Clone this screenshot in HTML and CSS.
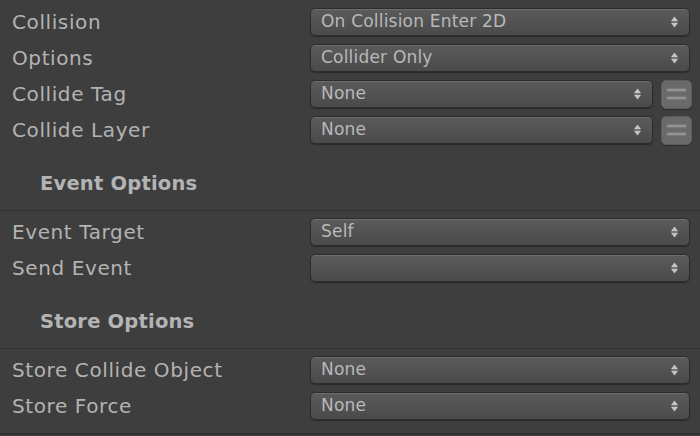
FILE: index.html
```html
<!DOCTYPE html>
<html>
<head>
<meta charset="utf-8">
<link rel="stylesheet" href="styles.css">
</head>
<body>
<div class="panel">
  <div class="row"><span class="label">Collision</span><div class="field"><div class="popup"><span class="val">On Collision Enter 2D</span><svg class="arr" width="7" height="12" viewBox="0 0 7 12"><path d="M3.5 0.5 L7 5 L0 5 Z M0 7 L7 7 L3.5 11.5 Z" fill="#c2c2c2"/><rect x="0.5" y="5.5" width="6" height="1" fill="#9a9a9a"/></svg></div></div></div>
  <div class="row"><span class="label">Options</span><div class="field"><div class="popup"><span class="val">Collider Only</span><svg class="arr" width="7" height="12" viewBox="0 0 7 12"><path d="M3.5 0.5 L7 5 L0 5 Z M0 7 L7 7 L3.5 11.5 Z" fill="#c2c2c2"/><rect x="0.5" y="5.5" width="6" height="1" fill="#9a9a9a"/></svg></div></div></div>
  <div class="row"><span class="label">Collide Tag</span><div class="field"><div class="popup"><span class="val">None</span><svg class="arr" width="7" height="12" viewBox="0 0 7 12"><path d="M3.5 0.5 L7 5 L0 5 Z M0 7 L7 7 L3.5 11.5 Z" fill="#c2c2c2"/><rect x="0.5" y="5.5" width="6" height="1" fill="#9a9a9a"/></svg></div><div class="btn"><span class="bar"></span><span class="bar"></span></div></div></div>
  <div class="row"><span class="label">Collide Layer</span><div class="field"><div class="popup"><span class="val">None</span><svg class="arr" width="7" height="12" viewBox="0 0 7 12"><path d="M3.5 0.5 L7 5 L0 5 Z M0 7 L7 7 L3.5 11.5 Z" fill="#c2c2c2"/><rect x="0.5" y="5.5" width="6" height="1" fill="#9a9a9a"/></svg></div><div class="btn"><span class="bar"></span><span class="bar"></span></div></div></div>
  <div class="header">Event Options</div>
  <div class="divider"></div>
  <div class="row first"><span class="label">Event Target</span><div class="field"><div class="popup"><span class="val">Self</span><svg class="arr" width="7" height="12" viewBox="0 0 7 12"><path d="M3.5 0.5 L7 5 L0 5 Z M0 7 L7 7 L3.5 11.5 Z" fill="#c2c2c2"/><rect x="0.5" y="5.5" width="6" height="1" fill="#9a9a9a"/></svg></div></div></div>
  <div class="row"><span class="label">Send Event</span><div class="field"><div class="popup"><span class="val"></span><svg class="arr" width="7" height="12" viewBox="0 0 7 12"><path d="M3.5 0.5 L7 5 L0 5 Z M0 7 L7 7 L3.5 11.5 Z" fill="#c2c2c2"/><rect x="0.5" y="5.5" width="6" height="1" fill="#9a9a9a"/></svg></div></div></div>
  <div class="header">Store Options</div>
  <div class="divider"></div>
  <div class="row first"><span class="label">Store Collide Object</span><div class="field"><div class="popup"><span class="val">None</span><svg class="arr" width="7" height="12" viewBox="0 0 7 12"><path d="M3.5 0.5 L7 5 L0 5 Z M0 7 L7 7 L3.5 11.5 Z" fill="#c2c2c2"/><rect x="0.5" y="5.5" width="6" height="1" fill="#9a9a9a"/></svg></div></div></div>
  <div class="row"><span class="label">Store Force</span><div class="field"><div class="popup"><span class="val">None</span><svg class="arr" width="7" height="12" viewBox="0 0 7 12"><path d="M3.5 0.5 L7 5 L0 5 Z M0 7 L7 7 L3.5 11.5 Z" fill="#c2c2c2"/><rect x="0.5" y="5.5" width="6" height="1" fill="#9a9a9a"/></svg></div></div></div>
  <div class="bottom"></div>
</div>
</body>
</html>
```

FILE: styles.css
```css
html, body {
  margin: 0;
  padding: 0;
  background: #3e3e3e;
}
body {
  width: 700px;
  height: 436px;
  overflow: hidden;
  font-family: "DejaVu Sans", Verdana, sans-serif;
}
.panel {
  padding-top: 4px;
  display: flex;
  flex-direction: column;
}
.row {
  display: grid;
  grid-template-columns: 298px 1fr;
  height: 36px;
  align-items: center;
  padding-left: 12px;
  padding-right: 10px;
}
.row.first {
  margin-top: 3px;
}
.label {
  color: #b3b3b3;
  font-size: 20px;
  letter-spacing: 0.6px;
  white-space: nowrap;
  position: relative;
  top: 0;
}
.field {
  display: flex;
  align-items: center;
  gap: 8px;
  height: 28px;
}
.popup {
  flex: 1;
  height: 28px;
  box-sizing: border-box;
  border: 1px solid #2c2c2c;
  border-radius: 5px;
  background: linear-gradient(#5b5b5b, #4a4a4a);
  box-shadow: inset 0 1px 0 #6e6e6e, 0 1px 1px rgba(0,0,0,0.35);
  display: flex;
  align-items: center;
  padding: 0 11px 0 10px;
}
.val {
  flex: 1;
  color: #b9b9b9;
  font-size: 17px;
  letter-spacing: 0.2px;
  white-space: nowrap;
  position: relative;
  top: -1px;
}
.arr {
  display: block;
}
.btn {
  width: 31px;
  height: 29px;
  box-sizing: border-box;
  border-radius: 5px;
  background: #6a6a6a;
  border: 1px solid #5c5c5c;
  box-shadow: 0 1px 1px rgba(0,0,0,0.3);
  display: flex;
  flex-direction: column;
  align-items: center;
  justify-content: center;
  gap: 6px;
  margin-right: -2px;
}
.bar {
  display: block;
  width: 19px;
  height: 2px;
  border-radius: 1px;
  background: #939393;
  box-shadow: 0 0 1.5px 0.5px rgba(150,150,150,0.6);
}
.header {
  height: 62px;
  box-sizing: border-box;
  padding-top: 24px;
  padding-left: 40px;
  color: #b4b4b4;
  font-size: 19.5px;
  font-weight: bold;
  letter-spacing: 0.2px;
}
.divider {
  height: 1px;
  background: #303030;
}
.bottom {
  margin-top: 9px;
  height: 2px;
  background: #303030;
}
```
